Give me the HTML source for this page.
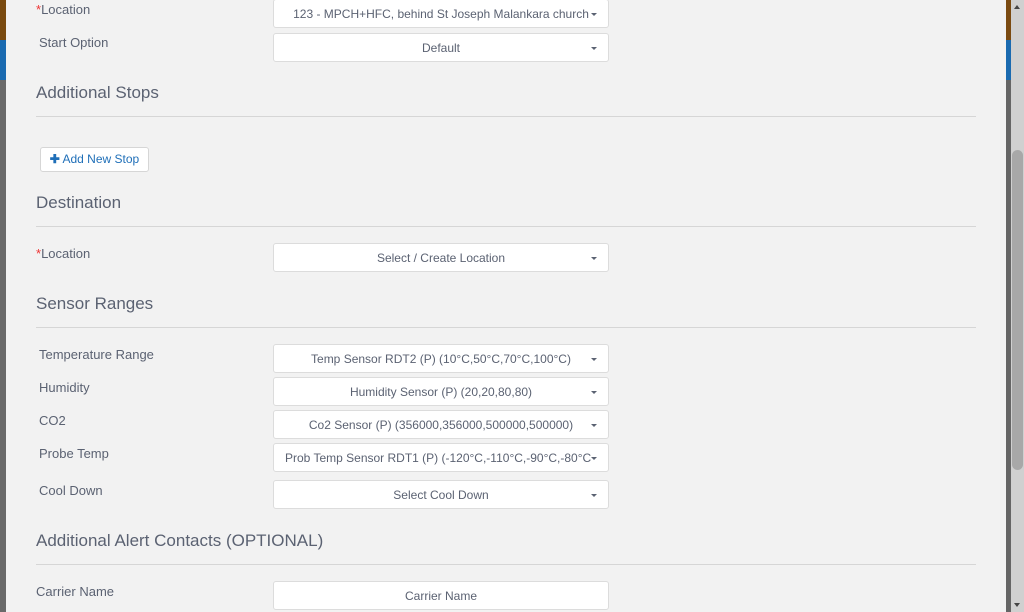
<html><head><style>
body{margin:0;width:1024px;height:612px;overflow:hidden;background:#f2f2f2;font-family:"Liberation Sans",sans-serif;color:#5b6272;position:relative}
.a{position:absolute}
.l{font-size:13px}
.h{font-size:17px;color:#5b6272}
.hr{position:absolute;left:36px;width:940px;height:1px;background:#d6d6d6}
.s{position:absolute;left:273px;width:334px;height:27px;background:#fff;border:1px solid #dcdcdc;border-radius:3px;font-size:12px;text-align:center;line-height:29px;box-sizing:content-box;white-space:nowrap;overflow:hidden}
.s span{display:inline-block;max-width:300px;overflow:hidden;vertical-align:top}
.s:after{content:"";position:absolute;right:11px;top:13px;border-left:3px solid transparent;border-right:3px solid transparent;border-top:3px solid #5b6272}
.s.n:after{display:none}
.r{color:#e33}
</style></head><body>
<div class="a" style="left:0;top:0;width:6px;height:40px;background:#7a4a10"></div>
<div class="a" style="left:0;top:40px;width:6px;height:40px;background:#1a6ab0"></div>
<div class="a" style="left:0;top:80px;width:6px;height:532px;background:#6a6a6a"></div>
<div class="a" style="left:1006px;top:0;width:5px;height:40px;background:#7a4a10"></div>
<div class="a" style="left:1006px;top:40px;width:5px;height:40px;background:#1a6ab0"></div>
<div class="a" style="left:1006px;top:80px;width:5px;height:532px;background:#656565"></div>
<div class="a" style="left:1011px;top:0;width:13px;height:612px;background:#d0d0d0"></div>
<div class="a" style="left:1012px;top:150px;width:11px;height:320px;background:#a8a8a8;border-radius:6px"></div>
<div class="a" style="left:1014px;top:5px;border-left:3px solid transparent;border-right:3px solid transparent;border-bottom:4px solid #444"></div>
<div class="a" style="left:1014px;top:603px;border-left:3px solid transparent;border-right:3px solid transparent;border-top:4px solid #444"></div>

<div class="a l" style="left:36px;top:2px"><span class="r">*</span>Location</div>
<div class="s" style="top:-1px"><span>123 - MPCH+HFC, behind St Joseph Malankara church</span></div>
<div class="a l" style="left:39px;top:35px">Start Option</div>
<div class="s" style="top:33px"><span>Default</span></div>
<div class="a h" style="left:36px;top:83px">Additional Stops</div>
<div class="hr" style="top:116px"></div>
<div class="a" style="left:40px;top:147px;width:107px;height:23px;background:#fff;border:1px solid #d6d6d6;border-radius:3px;font-size:12px;color:#1f6fb8;line-height:23px;text-align:center"><b>✚</b> Add New Stop</div>
<div class="a h" style="left:36px;top:193px">Destination</div>
<div class="hr" style="top:226px"></div>
<div class="a l" style="left:36px;top:246px"><span class="r">*</span>Location</div>
<div class="s" style="top:243px"><span>Select / Create Location</span></div>
<div class="a h" style="left:36px;top:294px">Sensor Ranges</div>
<div class="hr" style="top:327px"></div>
<div class="a l" style="left:39px;top:347px">Temperature Range</div>
<div class="s" style="top:344px"><span>Temp Sensor RDT2 (P) (10°C,50°C,70°C,100°C)</span></div>
<div class="a l" style="left:39px;top:380px">Humidity</div>
<div class="s" style="top:377px"><span>Humidity Sensor (P) (20,20,80,80)</span></div>
<div class="a l" style="left:39px;top:413px">CO2</div>
<div class="s" style="top:410px"><span>Co2 Sensor (P) (356000,356000,500000,500000)</span></div>
<div class="a l" style="left:39px;top:446px">Probe Temp</div>
<div class="s" style="top:443px"><span style="max-width:306px;margin-left:-6px">Prob Temp Sensor RDT1 (P) (-120°C,-110°C,-90°C,-80°C)</span></div>
<div class="a l" style="left:39px;top:483px">Cool Down</div>
<div class="s" style="top:480px"><span>Select Cool Down</span></div>
<div class="a h" style="left:36px;top:531px">Additional Alert Contacts (OPTIONAL)</div>
<div class="hr" style="top:564px"></div>
<div class="a l" style="left:36px;top:584px">Carrier Name</div>
<div class="s n" style="top:581px"><span>Carrier Name</span></div>
</body></html>
